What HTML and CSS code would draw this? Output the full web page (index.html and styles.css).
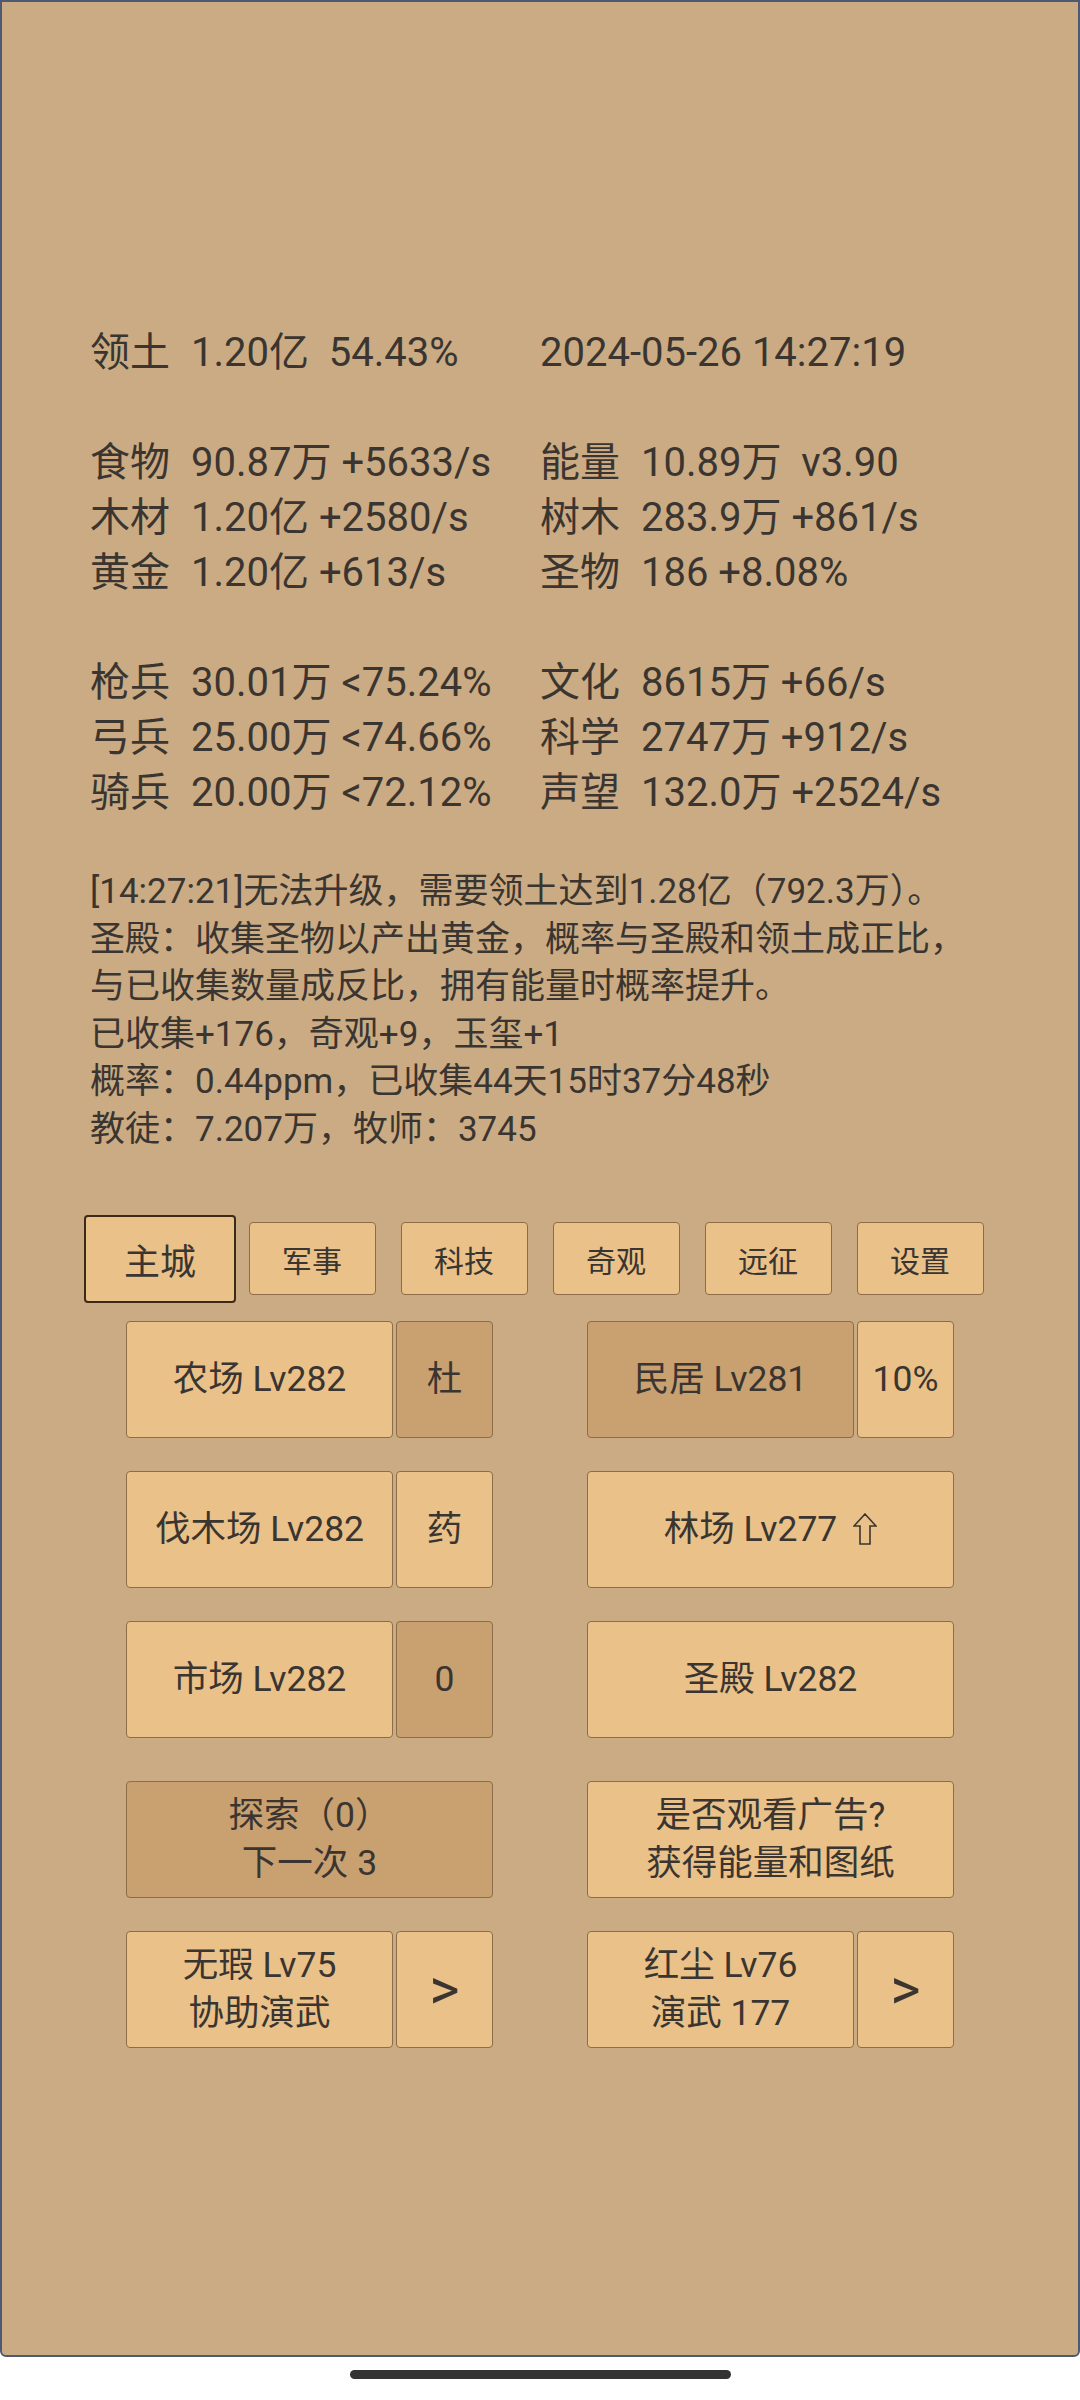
FILE: index.html
```html
<!DOCTYPE html>
<html lang="zh-CN">
<head>
  <meta charset="UTF-8" />
  <meta name="viewport" content="width=device-width, initial-scale=1.0"/>
  <title>主城</title>
  <link rel="stylesheet" href="styles.css">
</head>
<body>

  <div class="screen">

    <!-- Resources -->
    <div class="stats">
      <div class="stat-row">
        <span>领土</span><span>1.20亿  54.43%</span><span class="clock">2024-05-26 14:27:19</span>
      </div>
      <div class="gap-row"></div>
      <div class="stat-row">
        <span>食物</span><span>90.87万 +5633/s</span><span>能量</span><span>10.89万  v3.90</span>
      </div>
      <div class="stat-row">
        <span>木材</span><span>1.20亿 +2580/s</span><span>树木</span><span>283.9万 +861/s</span>
      </div>
      <div class="stat-row">
        <span>黄金</span><span>1.20亿 +613/s</span><span>圣物</span><span>186 +8.08%</span>
      </div>
      <div class="gap-row"></div>
      <div class="stat-row">
        <span>枪兵</span><span>30.01万 &lt;75.24%</span><span>文化</span><span>8615万 +66/s</span>
      </div>
      <div class="stat-row">
        <span>弓兵</span><span>25.00万 &lt;74.66%</span><span>科学</span><span>2747万 +912/s</span>
      </div>
      <div class="stat-row">
        <span>骑兵</span><span>20.00万 &lt;72.12%</span><span>声望</span><span>132.0万 +2524/s</span>
      </div>
    </div>

    <!-- Message log -->
    <div class="log">
      <p>[14:27:21]无法升级，需要领土达到1.28亿（792.3万）。</p>
      <p>圣殿：收集圣物以产出黄金，概率与圣殿和领土成正比，</p>
      <p>与已收集数量成反比，拥有能量时概率提升。</p>
      <p>已收集+176，奇观+9，玉玺+1</p>
      <p>概率：0.44ppm，已收集44天15时37分48秒</p>
      <p>教徒：7.207万，牧师：3745</p>
    </div>

    <!-- Tabs -->
    <nav class="tabs">
      <div class="tab-slot"><button class="tab active">主城</button></div>
      <div class="tab-slot"><button class="tab">军事</button></div>
      <div class="tab-slot"><button class="tab">科技</button></div>
      <div class="tab-slot"><button class="tab">奇观</button></div>
      <div class="tab-slot"><button class="tab">远征</button></div>
      <div class="tab-slot"><button class="tab">设置</button></div>
    </nav>

    <!-- Buildings -->
    <div class="buildings">
      <div class="row">
        <div class="group">
          <button class="btn">农场 Lv282</button>
          <button class="btn side dark">杜</button>
        </div>
        <div class="group">
          <button class="btn dark">民居 Lv281</button>
          <button class="btn side">10%</button>
        </div>
      </div>

      <div class="row">
        <div class="group">
          <button class="btn">伐木场 Lv282</button>
          <button class="btn side">药</button>
        </div>
        <div class="group">
          <button class="btn">林场 Lv277
            <svg class="up-arrow" width="24" height="32" viewBox="0 0 24 32">
              <path d="M12 1 L23 13 L17 13 L17 31 L7 31 L7 13 L1 13 Z" fill="none" stroke="#3a3530" stroke-width="1.6" stroke-linejoin="miter"/>
            </svg>
          </button>
        </div>
      </div>

      <div class="row">
        <div class="group">
          <button class="btn">市场 Lv282</button>
          <button class="btn side dark">0</button>
        </div>
        <div class="group">
          <button class="btn">圣殿 Lv282</button>
        </div>
      </div>

      <div class="row spaced">
        <div class="group">
          <button class="btn dark">探索（0）<br>下一次 3</button>
        </div>
        <div class="group">
          <button class="btn">是否观看广告?<br>获得能量和图纸</button>
        </div>
      </div>

      <div class="row">
        <div class="group">
          <button class="btn">无瑕 Lv75<br>协助演武</button>
          <button class="btn side next">&gt;</button>
        </div>
        <div class="group">
          <button class="btn">红尘 Lv76<br>演武 177</button>
          <button class="btn side next">&gt;</button>
        </div>
      </div>
    </div>

  </div>

  <div class="home-bar">
    <span class="home-pill"></span>
  </div>

</body>
</html>
```

FILE: styles.css
```css
* {
  box-sizing: border-box;
}

body {
  margin: 0;
  background-color: #fff;
  font-family: Roboto, "Noto Sans CJK SC", sans-serif;
  color: #3a3530;
}

.screen {
  height: 2357px;
  background-color: #cbab83;
  border: 2px solid #4d5a72;
  border-radius: 0 0 6px 6px;
  padding-top: 323px;
}

/* resources */
.stats {
  padding-left: 88px;
  font-size: 40px;
  line-height: 55px;
}

.stat-row {
  display: grid;
  grid-template-columns: 101px 349px 101px auto;
  white-space: pre;
}

.gap-row {
  height: 55px;
}

.clock {
  grid-column: 3 / span 2;
}

/* log */
.log {
  margin-top: 48px;
  padding-left: 88px;
  font-size: 35px;
  line-height: 47.6px;
}

.log p {
  margin: 0;
}

/* tabs */
.tabs {
  width: 912px;
  height: 88px;
  margin: 61px auto 0;
  display: flex;
  align-items: center;
}

.tab-slot {
  width: 152px;
  display: flex;
  justify-content: center;
}

button {
  font-family: inherit;
  color: inherit;
  padding: 0;
  margin: 0;
  cursor: pointer;
}

.tab {
  width: 127px;
  height: 73px;
  font-size: 30px;
  background-color: #e9c189;
  border: 1px solid #8c6d48;
  border-radius: 4px;
}

.tab.active {
  width: 153px;
  height: 88px;
  font-size: 36px;
  border: 2px solid #3b2a17;
}

/* buildings */
.buildings {
  width: 828px;
  margin: 18px auto 0;
  display: flex;
  flex-direction: column;
  gap: 33px;
}

.row {
  height: 117px;
  display: flex;
  justify-content: space-between;
}

.row.spaced {
  margin-top: 10px;
}

.group {
  width: 367px;
  display: flex;
  gap: 3px;
}

.btn {
  flex: 1;
  display: flex;
  align-items: center;
  justify-content: center;
  text-align: center;
  background-color: #e9c189;
  border: 1px solid #8c6d48;
  border-radius: 4px;
  font-size: 35.5px;
  line-height: 48px;
}

.btn.side {
  flex: 0 0 97px;
}

.btn.dark {
  background-color: #c9a070;
}

.btn.next {
  font-size: 58px;
}

.up-arrow {
  margin-left: 16px;
}

/* android home indicator */
.home-bar {
  height: 43px;
  display: flex;
  justify-content: center;
  padding-top: 13px;
}

.home-pill {
  width: 381px;
  height: 9px;
  border-radius: 5px;
  background-color: #333;
}
```
